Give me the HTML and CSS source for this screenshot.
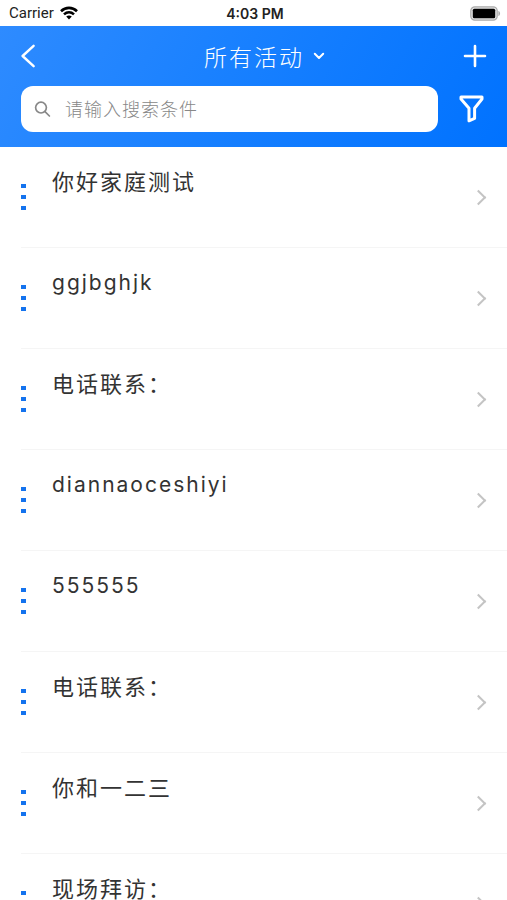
FILE: index.html
```html
<!DOCTYPE html>
<html lang="zh-CN">
<head>
  <meta charset="UTF-8" />
  <meta name="viewport" content="width=device-width, initial-scale=1.0" />
  <title>所有活动</title>
  <link rel="stylesheet" href="styles.css">
</head>
<body>

<!-- Status Bar -->
<div class="status-bar">
  <div class="carrier">
    <span>Carrier</span>
    <svg width="18" height="14" viewBox="0 0 18 14" fill="none" stroke="#000" stroke-width="2.6">
      <path d="M1 5.2C5.6 0.8 12.4 0.8 17 5.2" />
      <path d="M4 8.4C7 5.7 11 5.7 14 8.4" />
      <path d="M6.2 10.6C7.9 9.1 10.1 9.1 11.8 10.6L9 13.6Z" fill="#000" stroke="none" />
    </svg>
  </div>
  <div class="time">4:03 PM</div>
  <div class="battery">
    <svg width="31" height="15" viewBox="0 0 31 15">
      <rect x="0.8" y="0.8" width="26.4" height="13.4" rx="4" fill="#e4e4e4" stroke="#aaa" stroke-width="1.2" />
      <rect x="2.8" y="2.8" width="22.4" height="9.4" rx="1.5" fill="#000" />
      <path d="M28.4 5C30.6 5.6 30.6 9.4 28.4 10Z" fill="#aaa" />
    </svg>
  </div>
</div>

<!-- Header -->
<header class="header">
  <div class="nav">
    <button class="icon-button back" aria-label="返回">
      <svg width="16" height="24" viewBox="0 0 16 24" fill="none" stroke="#fff" stroke-width="2.4" stroke-linecap="round" stroke-linejoin="round">
        <path d="M12.6 1.8L1.6 12L12.6 22.2" />
      </svg>
    </button>
    <button class="title">
      <span>所有活动</span>
      <svg width="12" height="8" viewBox="0 0 12 8" fill="none" stroke="#fff" stroke-width="2" stroke-linecap="round" stroke-linejoin="round">
        <path d="M1.8 1.8L6 6L10.2 1.8" />
      </svg>
    </button>
    <button class="icon-button add" aria-label="新建">
      <svg width="24" height="24" viewBox="0 0 24 24" fill="none" stroke="#fff" stroke-width="2.6" stroke-linecap="round">
        <path d="M12 2V22M2 12H22" />
      </svg>
    </button>
  </div>
  <div class="search-row">
    <label class="search">
      <svg width="18" height="18" viewBox="0 0 18 18" fill="none" stroke="#888" stroke-width="1.7" stroke-linecap="round">
        <circle cx="7" cy="7.6" r="5.4" />
        <path d="M11 11.6L15.4 16" />
      </svg>
      <input type="text" placeholder="请输入搜索条件" aria-label="搜索">
    </label>
    <button class="icon-button filter" aria-label="筛选">
      <svg width="25" height="28" viewBox="0 0 25 28" fill="none" stroke="#fff" stroke-width="3" stroke-linejoin="round">
        <path d="M2 2H23V4L15.6 13.2V23.4L10 25.8V13.2L2 4Z" />
      </svg>
    </button>
  </div>
</header>

<!-- Activity List -->
<ul class="list">
  <li class="item">
    <button class="more" aria-label="更多"><i></i><i></i><i></i></button>
    <a href="#">你好家庭测试</a>
  </li>
  <li class="item">
    <button class="more" aria-label="更多"><i></i><i></i><i></i></button>
    <a href="#" class="latin">ggjbghjk</a>
  </li>
  <li class="item">
    <button class="more" aria-label="更多"><i></i><i></i><i></i></button>
    <a href="#">电话联系：</a>
  </li>
  <li class="item">
    <button class="more" aria-label="更多"><i></i><i></i><i></i></button>
    <a href="#" class="latin">diannaoceshiyi</a>
  </li>
  <li class="item">
    <button class="more" aria-label="更多"><i></i><i></i><i></i></button>
    <a href="#" class="latin">555555</a>
  </li>
  <li class="item">
    <button class="more" aria-label="更多"><i></i><i></i><i></i></button>
    <a href="#">电话联系：</a>
  </li>
  <li class="item">
    <button class="more" aria-label="更多"><i></i><i></i><i></i></button>
    <a href="#">你和一二三</a>
  </li>
  <li class="item">
    <button class="more" aria-label="更多"><i></i><i></i><i></i></button>
    <a href="#">现场拜访：</a>
  </li>
</ul>

</body>
</html>
```
FILE: styles.css
```css
* { box-sizing: border-box; }

body {
  margin: 0;
  height: 100vh;
  display: flex;
  flex-direction: column;
  background-color: #fff;
  color: #333;
  font-family: Inter, "Noto Sans CJK SC", sans-serif;
  overflow: hidden;
}

button {
  padding: 0;
  border: none;
  background: none;
  color: inherit;
  font: inherit;
  cursor: pointer;
}

svg {
  display: block;
  flex: none;
}

.status-bar {
  flex: none;
  display: grid;
  grid-template-columns: 1fr auto 1fr;
  align-items: center;
  height: 26px;
  padding: 0 6px 0 9px;
  color: #222;
  font-size: 14px;
}

.carrier {
  display: flex;
  align-items: center;
  gap: 6px;
  height: 26px;
}

.carrier span {
  font-family: Roboto, sans-serif;
  font-size: 15px;
}

.time {
  font-weight: 600;
}

.battery {
  justify-self: end;
}

.header {
  flex: none;
  padding: 0 20px 15px 21px;
  background: linear-gradient(120deg, #2e8bff 0%, #1880ff 45%, #0072ff 100%);
  color: #fff;
}

.nav {
  display: grid;
  grid-template-columns: 1fr auto 1fr;
  align-items: center;
  height: 60px;
}

.title {
  display: flex;
  align-items: center;
  gap: 9px;
  padding-left: 21px;
  font-size: 23px;
  font-weight: 300;
  letter-spacing: 2px;
}

.add {
  justify-self: end;
}

.back {
  justify-self: start;
}

.search-row {
  display: flex;
  align-items: center;
  gap: 21px;
  padding-right: 3px;
}

.search {
  flex: 1;
  display: flex;
  align-items: center;
  gap: 13px;
  height: 46px;
  padding: 0 13px;
  background-color: #fff;
  border-radius: 12px;
}

.search input {
  flex: 1;
  min-width: 0;
  padding: 0;
  border: none;
  outline: none;
  background: none;
  color: #333;
  font: inherit;
  font-size: 18px;
  font-weight: 300;
  letter-spacing: 1px;
}

.search input::placeholder {
  color: #888;
}

.list {
  flex: 1;
  min-height: 0;
  margin: 0;
  padding: 0 0 0 21px;
  list-style: none;
  overflow-y: auto;
  scrollbar-width: none;
}

.item {
  display: flex;
  align-items: center;
  gap: 26px;
  height: 101px;
  border-bottom: 1px solid #f5f5f5;
}

.more {
  display: flex;
  flex-direction: column;
  gap: 7px;
}

.more i {
  width: 5px;
  height: 4px;
  background-color: #1473ee;
}

.item a {
  flex: 1;
  display: flex;
  justify-content: space-between;
  height: 100%;
  padding: 18px 23px 0 0;
  color: #333;
  font-size: 22px;
  line-height: 34px;
  letter-spacing: 2px;
  text-decoration: none;
}

.item .latin {
  font-size: 21px;
}

/* right arrow */
.item a::after {
  content: "";
  align-self: center;
  width: 9px;
  height: 9px;
  margin-bottom: 18px;
  border-top: 2px solid #c4c4c4;
  border-right: 2px solid #c4c4c4;
  transform: rotate(45deg);
}
```
